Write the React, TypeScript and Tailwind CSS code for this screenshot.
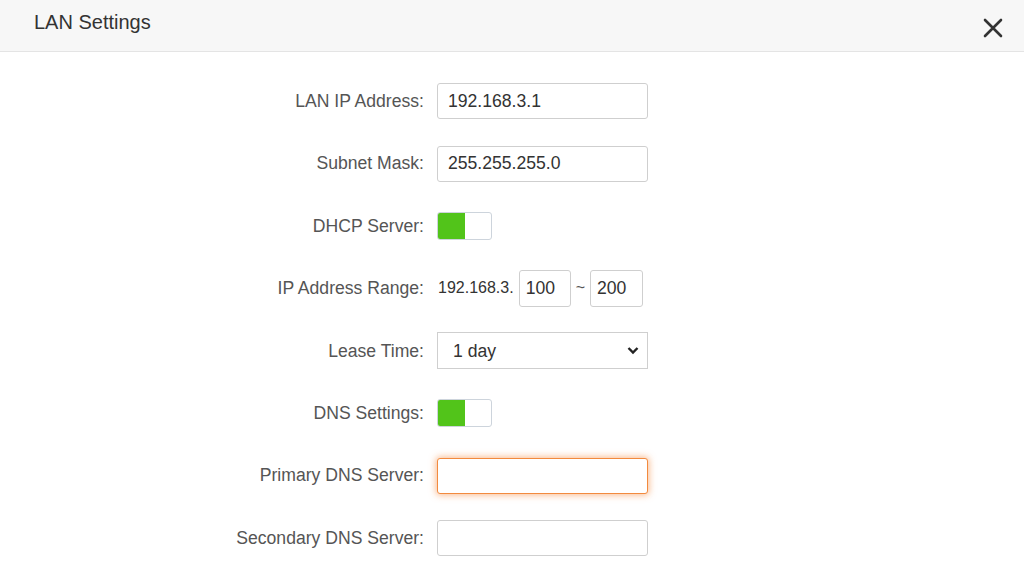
import { useState } from 'react';

const labelCls = 'w-[437px] shrink-0 text-right text-[17.6px] text-[#555] pr-[13px]';
const inputCls =
  'h-[36px] w-[211px] rounded-[3px] border border-[#cfcfcf] bg-white px-[10px] text-[17.6px] text-[#333] outline-none';

function Toggle({ on }: { on: boolean }) {
  return (
    <div className="flex h-[28px] w-[55px] overflow-hidden rounded-[3px] border border-[#cdd4dc] bg-white">
      <div className={on ? 'h-full w-[27px] bg-[#52c41a]' : 'h-full w-[27px] bg-white'} />
    </div>
  );
}

function Row({ label, children }: { label: string; children: React.ReactNode }) {
  return (
    <div className="flex h-[62.4px] items-center">
      <span className={labelCls}>{label}</span>
      {children}
    </div>
  );
}

export default function App() {
  const [lease, setLease] = useState('1 day');

  return (
    <div className="h-[576px] w-[1024px] overflow-hidden bg-white" style={{ fontFamily: '"Liberation Sans", Arial, sans-serif' }}>
      <div className="flex h-[52px] items-start justify-between border-b border-[#e4e4e4] bg-[#f7f7f7]">
        <h2 className="pl-[34px] pt-[10px] text-[20px] leading-[24px] text-[#333]">LAN Settings</h2>
        <button type="button" className="mr-[19px] mt-[16px] h-[24px] w-[24px]">
          <svg viewBox="0 0 24 24" width="24" height="24" fill="none" stroke="#333" strokeWidth="2.6" strokeLinecap="round">
            <path d="M4 4 L20 20 M20 4 L4 20" />
          </svg>
        </button>
      </div>

      <div className="pt-[18px]">
        <Row label="LAN IP Address:">
          <input className={inputCls} defaultValue="192.168.3.1" />
        </Row>
        <Row label="Subnet Mask:">
          <input className={inputCls} defaultValue="255.255.255.0" />
        </Row>
        <Row label="DHCP Server:">
          <Toggle on />
        </Row>
        <Row label="IP Address Range:">
          <span className="ml-[1px] text-[16px] text-[#333]">192.168.3.</span>
          <input className="ml-[5px] h-[37px] w-[52px] rounded-[3px] border border-[#cfcfcf] bg-white px-[6px] text-[17.6px] text-[#333] outline-none" defaultValue="100" />
          <span className="mx-[5px] text-[16px] text-[#555]">~</span>
          <input className="h-[37px] w-[53px] rounded-[3px] border border-[#cfcfcf] bg-white px-[6px] text-[17.6px] text-[#333] outline-none" defaultValue="200" />
        </Row>
        <Row label="Lease Time:">
          <div className="relative h-[37px] w-[211px] border border-[#cfcfcf] bg-white">
            <select
              value={lease}
              onChange={(e) => setLease(e.target.value)}
              className="h-full w-full appearance-none bg-transparent pl-[15px] text-[17.6px] text-[#333] outline-none"
            >
              <option>1 day</option>
              <option>1 hour</option>
              <option>1 week</option>
            </select>
            <svg className="pointer-events-none absolute right-[8px] top-[13px]" width="12" height="9" viewBox="0 0 12 9" fill="none" stroke="#222" strokeWidth="2.4">
              <path d="M1.5 2 L6 6.5 L10.5 2" />
            </svg>
          </div>
        </Row>
        <Row label="DNS Settings:">
          <Toggle on />
        </Row>
        <Row label="Primary DNS Server:">
          <input className={inputCls + ' !border-[#f28a3e] shadow-[0_0_7px_1px_rgba(245,136,61,0.6)]'} defaultValue="" />
        </Row>
        <Row label="Secondary DNS Server:">
          <input className={inputCls} defaultValue="" />
        </Row>
      </div>
    </div>
  );
}
